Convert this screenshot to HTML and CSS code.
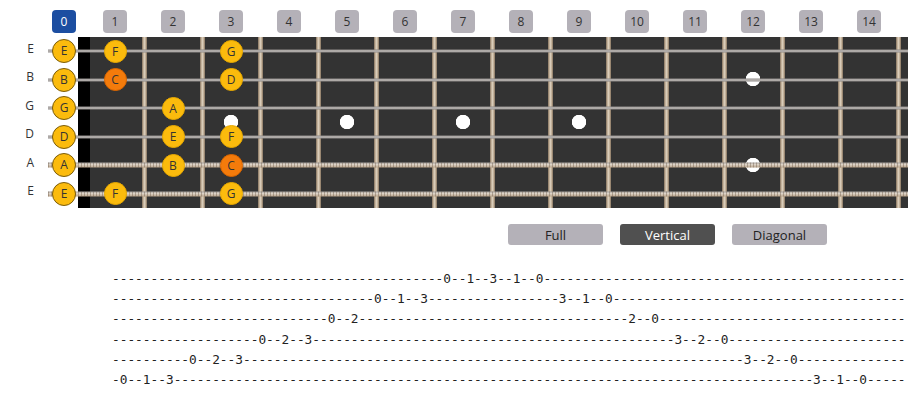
FILE: index.html
```html
<!DOCTYPE html>
<html lang="en">
<head>
    <meta charset="UTF-8">
    <meta name="viewport" content="width=device-width, initial-scale=1.0">
    <title>Scale fretboard</title>
    <link rel="stylesheet" href="styles.css">
</head>
<body>
    <div class="neck">
        <div class="fret-nums">
            <span class="num num-open">0</span>
            <span class="num f1">1</span>
            <span class="num f2">2</span>
            <span class="num f3">3</span>
            <span class="num f4">4</span>
            <span class="num f5">5</span>
            <span class="num f6">6</span>
            <span class="num f7">7</span>
            <span class="num f8">8</span>
            <span class="num f9">9</span>
            <span class="num f10">10</span>
            <span class="num f11">11</span>
            <span class="num f12">12</span>
            <span class="num f13">13</span>
            <span class="num f14">14</span>
        </div>

        <div class="board">
            <div class="string plain">
                <span class="label">E</span>
                <b class="note open">E</b>
                <b class="note f1">F</b>
                <b class="note f3">G</b>
            </div>
            <div class="string plain">
                <span class="label">B</span>
                <b class="note open">B</b>
                <b class="note root f1">C</b>
                <b class="note f3">D</b>
            </div>
            <div class="string plain">
                <span class="label">G</span>
                <b class="note open">G</b>
                <b class="note f2">A</b>
            </div>
            <div class="string plain">
                <span class="label">D</span>
                <b class="note open">D</b>
                <b class="note f2">E</b>
                <b class="note f3">F</b>
            </div>
            <div class="string wound">
                <span class="label">A</span>
                <b class="note open">A</b>
                <b class="note f2">B</b>
                <b class="note root f3">C</b>
            </div>
            <div class="string wound">
                <span class="label">E</span>
                <b class="note open">E</b>
                <b class="note f1">F</b>
                <b class="note f3">G</b>
            </div>
        </div>
    </div>

    <div class="modes">
        <button>Full</button>
        <button class="active">Vertical</button>
        <button>Diagonal</button>
    </div>

<pre class="tab">-------------------------------------------0--1--3--1--0-----------------------------------------------
----------------------------------0--1--3-----------------3--1--0--------------------------------------
----------------------------0--2-----------------------------------2--0--------------------------------
-------------------0--2--3-----------------------------------------------3--2--0-----------------------
----------0--2--3-----------------------------------------------------------------3--2--0--------------
-0--1--3-----------------------------------------------------------------------------------3--1--0-----</pre>
</body>
</html>
```

FILE: styles.css
```css
body {
    margin: 0;
    font-family: "Open Sans", Arial, sans-serif;
    color: #333;
    background-color: #fff;
}

/* Общая сетка для номеров ладов и струн */
.fret-nums, .string {
    display: grid;
    grid-template-columns: 50px 28px 8px repeat(14, 58px) 1fr;
    align-items: center;
}
.fret-nums {
    padding-top: 10px;
    height: 23px;
    margin-bottom: 4px;
}
.num {
    grid-column: 2;
    justify-self: center;
    width: 24px;
    height: 23px;
    line-height: 23px;
    text-align: center;
    font-size: 12px;
    border-radius: 4px;
    background-color: #b4b1b8;
    color: #333;
}
.num-open {
    background-color: #1c4ea1;
    color: #fff;
}

/* Гриф: белое поле, порожек, лады и точки-метки */
.board {
    height: 171px;
    background:
        radial-gradient(circle 7.5px at 231px 85px, #fff 92%, transparent 100%),
        radial-gradient(circle 7.5px at 347px 85px, #fff 92%, transparent 100%),
        radial-gradient(circle 7.5px at 463px 85px, #fff 92%, transparent 100%),
        radial-gradient(circle 7.5px at 579px 85px, #fff 92%, transparent 100%),
        radial-gradient(circle 7.5px at 753px 42px, #fff 92%, transparent 100%),
        radial-gradient(circle 7.5px at 753px 128px, #fff 92%, transparent 100%),
        linear-gradient(#fff, #fff) 0 0 / 78px 100% no-repeat,
        linear-gradient(#000, #000) 78px 0 / 12px 100% no-repeat,
        linear-gradient(to right, transparent 53px, #7a6956 53px, #b9a68e 54px, #d9ccb9 55.5px, #b9a68e 57px, #7a6956 58px) 31px 0 / 58px 100% repeat-x;
    background-color: #333;
}
.string {
    height: 28.5px;
    position: relative;
}
.string::before {
    content: '';
    position: absolute;
    left: 48px;
    right: 0;
    top: 50%;
    height: 3px;
    transform: translateY(-50%);
    background: linear-gradient(#8e8a88, #bdb9b6, #8e8a88);
}
.string.wound::before {
    height: 5px;
    background:
        repeating-linear-gradient(90deg, rgba(90, 70, 50, 0.35) 0 1px, transparent 1px 3px),
        linear-gradient(#a9a4a0, #dcd2c6 40%, #b9a48c);
}
.label {
    grid-column: 1;
    text-align: right;
    padding-right: 16px;
    padding-bottom: 6px;
    font-size: 12px;
    color: #333;
}
.note {
    grid-column: 2;
    justify-self: center;
    position: relative;
    z-index: 1;
    box-sizing: border-box;
    width: 23px;
    height: 23px;
    line-height: 21px;
    border-radius: 50%;
    border: 1px solid #e8a900;
    background-color: #fbbb0d;
    text-align: center;
    font-size: 12px;
    font-weight: normal;
    color: #333;
}
.note.open {
    width: 24px;
    height: 24px;
    line-height: 22px;
    border: 1.5px solid #7a5c0c;
}
.note.root {
    background-color: #f47b0b;
    border-color: #d96500;
}

/* Колонки ладов (после .note и .num, чтобы перекрыть grid-column) */
.f1 { grid-column: 4; }
.f2 { grid-column: 5; }
.f3 { grid-column: 6; }
.f4 { grid-column: 7; }
.f5 { grid-column: 8; }
.f6 { grid-column: 9; }
.f7 { grid-column: 10; }
.f8 { grid-column: 11; }
.f9 { grid-column: 12; }
.f10 { grid-column: 13; }
.f11 { grid-column: 14; }
.f12 { grid-column: 15; }
.f13 { grid-column: 16; }
.f14 { grid-column: 17; }

.modes {
    display: flex;
    gap: 17px;
    margin: 16px 0 0 508px;
}
.modes button {
    width: 95px;
    height: 21px;
    padding: 0;
    border: none;
    border-radius: 3px;
    background-color: #b4b1b8;
    color: #222;
    font-family: "Open Sans", Arial, sans-serif;
    font-size: 13px;
    cursor: pointer;
}
.modes button.active {
    background-color: #505050;
    color: #fff;
}

.tab {
    margin: 24px 0 0 112px;
    font-family: "DejaVu Sans Mono", "Liberation Mono", monospace;
    font-size: 12.8px;
    line-height: 20.2px;
    color: #222;
    overflow: hidden;
}
```
